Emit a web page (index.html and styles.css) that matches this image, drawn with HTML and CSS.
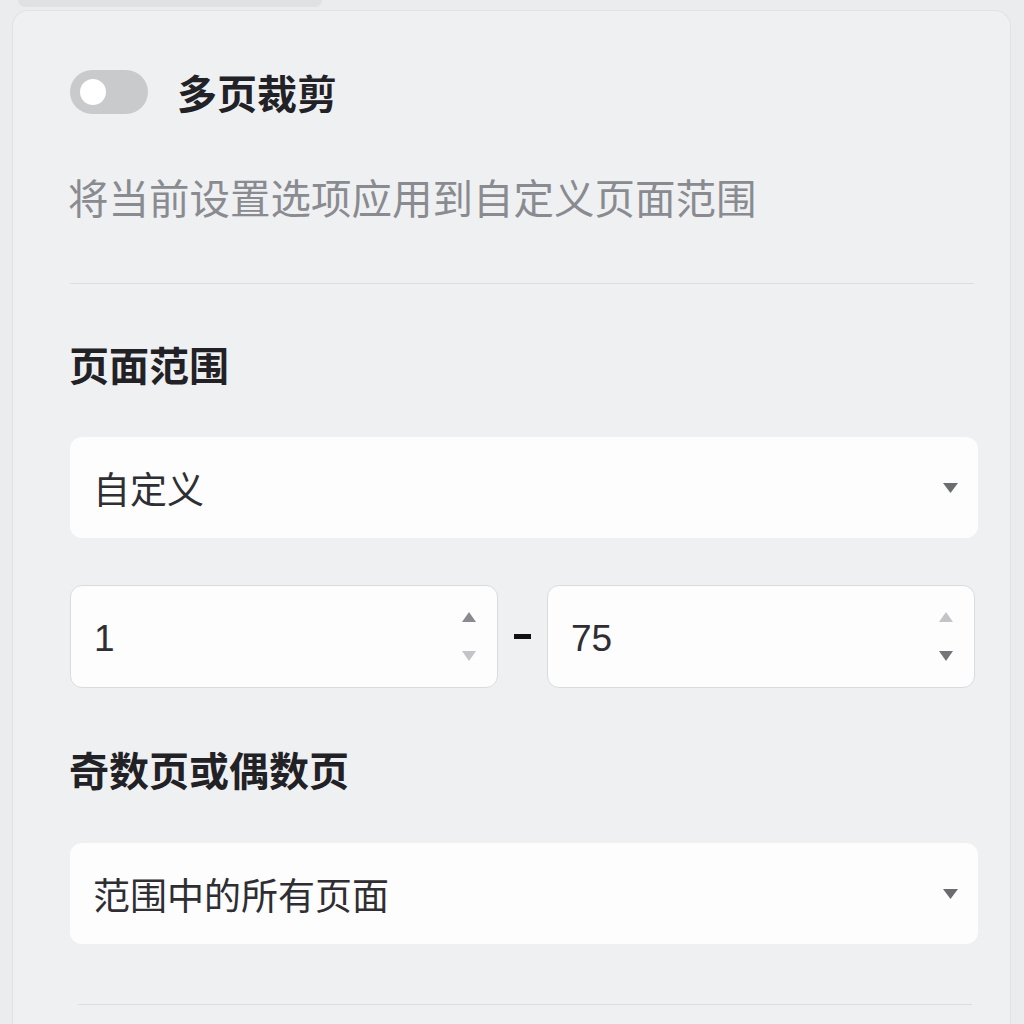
FILE: index.html
```html
<!DOCTYPE html>
<html lang="zh-CN">
<head>
<meta charset="utf-8">
<link rel="stylesheet" href="styles.css">
</head>
<body>
<div class="tab"></div>
<div class="panel">
  <div class="toggle-row">
    <div class="toggle"><span class="knob"></span></div>
    <span class="toggle-label">多页裁剪</span>
  </div>
  <p class="desc">将当前设置选项应用到自定义页面范围</p>
  <hr class="divider">
  <h2 class="heading">页面范围</h2>
  <div class="select">
    <span>自定义</span>
    <svg class="caret" width="15" height="10" viewBox="0 0 15 10"><path d="M0 0H15L7.5 10Z" fill="#6b6c70"/></svg>
  </div>
  <div class="range-row">
    <div class="num">
      <span>1</span>
      <div class="spin">
        <svg width="14" height="10" viewBox="0 0 14 10"><path d="M7 0L14 10H0Z" fill="#8a8b8f"/></svg>
        <svg width="14" height="10" viewBox="0 0 14 10"><path d="M0 0H14L7 10Z" fill="#c3c4c7"/></svg>
      </div>
    </div>
    <span class="dash"></span>
    <div class="num">
      <span>75</span>
      <div class="spin">
        <svg width="14" height="10" viewBox="0 0 14 10"><path d="M7 0L14 10H0Z" fill="#c3c4c7"/></svg>
        <svg width="14" height="10" viewBox="0 0 14 10"><path d="M0 0H14L7 10Z" fill="#75767a"/></svg>
      </div>
    </div>
  </div>
  <h2 class="heading heading2">奇数页或偶数页</h2>
  <div class="select select2">
    <span>范围中的所有页面</span>
    <svg class="caret" width="15" height="10" viewBox="0 0 15 10"><path d="M0 0H15L7.5 10Z" fill="#6b6c70"/></svg>
  </div>
  <hr class="divider divider2">
</div>
</body>
</html>
```
FILE: styles.css
```css
html, body {
  margin: 0;
  padding: 0;
}
body {
  background: #ebecee;
  font-family: "Noto Sans CJK SC", "Noto Sans", sans-serif;
  overflow: hidden;
  height: 1024px;
}
.tab {
  margin-left: 18px;
  width: 304px;
  height: 7px;
  background: #e0e1e3;
  border-radius: 0 0 8px 8px;
}
.panel {
  margin: 3px 13px 0 12px;
  background: #eff0f2;
  border: 1px solid #e1e2e4;
  border-bottom: 0;
  border-radius: 16px 16px 0 0;
  padding: 59px 35px 0 57px;
  display: flex;
  flex-direction: column;
  height: 1014px;
  box-sizing: border-box;
  overflow: hidden;
}
.toggle-row {
  display: flex;
  align-items: center;
  gap: 29px;
  height: 44px;
  flex: none;
}
.toggle {
  width: 78px;
  height: 44px;
  border-radius: 22px;
  background: #c9cacc;
  position: relative;
  flex: none;
}
.knob {
  position: absolute;
  left: 10px;
  top: 9px;
  width: 26px;
  height: 26px;
  border-radius: 50%;
  background: #fff;
}
.toggle-label {
  font-size: 40px;
  font-weight: 700;
  color: #222226;
  line-height: 44px;
}
.desc {
  margin: 55px 0 0 -2px;
  font-size: 40.5px;
  line-height: 56px;
  color: #8a8b90;
  flex: none;
}
.divider {
  border: 0;
  border-top: 1.5px solid #dcdde0;
  margin: 58px 3px 0 0;
  width: 904px;
  flex: none;
}
.heading {
  margin: 52px 0 0 -1px;
  font-size: 40px;
  font-weight: 700;
  line-height: 56px;
  color: #222226;
  flex: none;
}
.heading2 {
  margin-top: 53px;
}
.select {
  margin-top: 45px;
  height: 101px;
  width: 908px;
  box-sizing: border-box;
  background: #fdfdfe;
  border-radius: 12px;
  display: flex;
  align-items: center;
  justify-content: space-between;
  padding: 0 20px 0 23px;
  font-size: 37px;
  color: #2e2e33;
  flex: none;
}
.select2 {
  margin-top: 46px;
}
.caret {
  flex: none;
}
.range-row {
  margin-top: 47px;
  display: flex;
  align-items: center;
  width: 905px;
  flex: none;
}
.num {
  width: 428px;
  height: 103px;
  box-sizing: border-box;
  background: #fdfdfe;
  border: 1.5px solid #dadbdd;
  border-radius: 12px;
  display: flex;
  align-items: center;
  justify-content: space-between;
  padding: 4px 21px 0 23px;
  font-size: 37px;
  color: #2e2e33;
  font-family: "Liberation Sans", "Noto Sans CJK SC", sans-serif;
}
.spin {
  display: flex;
  flex-direction: column;
  gap: 29px;
  margin-top: -4px;
}
.spin svg {
  display: block;
}
.dash {
  width: 17px;
  height: 5px;
  background: #111;
  margin: 0 16px;
  flex: none;
}
.divider2 {
  margin-top: 60px;
  margin-left: 8px;
  width: 894px;
}
```
